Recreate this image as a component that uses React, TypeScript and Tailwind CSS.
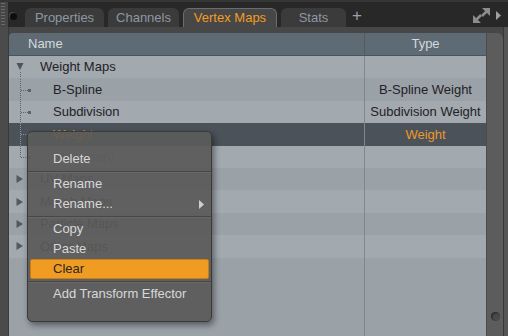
import React from 'react';

type RowKind = 'open' | 'closed' | 'child' | 'last';

interface TreeRow {
  kind: RowKind;
  name: string;
  type?: string;
  selected?: boolean;
}

const rows: TreeRow[] = [
  { kind: 'open', name: 'Weight Maps' },
  { kind: 'child', name: 'B-Spline', type: 'B-Spline Weight' },
  { kind: 'child', name: 'Subdivision', type: 'Subdivision Weight' },
  { kind: 'child', name: 'Weight', type: 'Weight', selected: true },
  { kind: 'last', name: '(new map)' },
  { kind: 'closed', name: 'UV Maps' },
  { kind: 'closed', name: 'Morph Maps' },
  { kind: 'closed', name: 'Particle Maps' },
  { kind: 'closed', name: 'Other Maps' },
];

const tabs = [
  { label: 'Properties', w: 'w-[79px]' },
  { label: 'Channels', w: 'w-[71px]' },
  { label: 'Vertex Maps', w: 'w-[94px]', active: true },
  { label: 'Stats', w: 'w-[65px]' },
];

function Connector({ kind, selected }: { kind: RowKind; selected?: boolean }) {
  const c = selected ? '#8c939a' : '#5c646b';
  return (
    <svg width="44" height="22" className="shrink-0 overflow-visible" shapeRendering="crispEdges">
      {kind === 'open' && (
        <>
          <polygon points="7.5,7 14.5,7 11,14" fill="#4d555c" shapeRendering="auto" />
          <line x1="11.5" y1="16" x2="11.5" y2="23" stroke={c} strokeDasharray="1 1" />
        </>
      )}
      {kind === 'closed' && <polygon points="7.5,7 14,11 7.5,15" fill="#525a61" shapeRendering="auto" />}
      {(kind === 'child' || kind === 'last') && (
        <>
          <line x1="11.5" y1="0" x2="11.5" y2={kind === 'last' ? 12 : 23} stroke={c} strokeDasharray="1 1" />
          <line x1="12" y1="11.5" x2="19" y2="11.5" stroke={c} strokeDasharray="1 1" />
          <rect x="19" y="10" width="3" height="3" fill={c} />
        </>
      )}
    </svg>
  );
}

function MenuItem({ label, sub, active }: { label: string; sub?: boolean; active?: boolean }) {
  return (
    <div
      className={`flex h-[20px] items-center pr-[7px] ${
        active
          ? 'mx-[2px] pl-[22px] rounded-[2px] bg-[#f09c22] border border-[#c97d12] text-[#2a2622]'
          : 'pl-[25px] text-[#d8d8d8]'
      }`}
    >
      <span className="flex-1">{label}</span>
      {sub && (
        <svg width="5" height="9">
          <polygon points="0,0 5,4.5 0,9" fill="#cfcfcf" />
        </svg>
      )}
    </div>
  );
}

function Separator() {
  return (
    <div className="flex h-[5px] flex-col justify-center">
      <div className="h-px bg-[#474747]" />
      <div className="h-px bg-[#686868]" />
    </div>
  );
}

export default function App() {
  return (
    <div className="relative h-[336px] w-[508px] overflow-hidden bg-[#474747] font-['Liberation_Sans',Arial,sans-serif] text-[13px]">
      {/* Tab bar */}
      <div className="flex h-[27px] border-t-2 border-[#353535] bg-[#282828]">
        <div className="w-[8px] bg-[#464646]">
          <svg width="8" height="25">
            {[1, 4, 7, 10, 13, 16, 19, 22].map((y) => (
              <rect key={y} x="1" y={y} width="4" height="1" fill="#6a6a6a" />
            ))}
          </svg>
        </div>
        <div className="ml-[2px] mt-[11px] h-[7px] w-[7px] rounded-full bg-[#0e0e0e] shadow-[-1px_-1px_0_rgba(90,90,90,0.6)]" />
        <div className="ml-[8px] flex items-end gap-[4px]">
          {tabs.map((t) => (
            <div
              key={t.label}
              className={`flex h-[19px] items-center justify-center rounded-t-[6px] ${t.w} ${
                t.active
                  ? 'border-x border-t border-[#6c6c6c] bg-[#474747] text-[#f29c22]'
                  : 'bg-[#3b3b3b] text-[#8d98a1]'
              }`}
            >
              {t.label}
            </div>
          ))}
        </div>
        <div className="ml-[6px] mt-[4px] text-[17px] leading-[20px] text-[#9aa3ab]">+</div>
        <div className="flex-1" />
        <svg width="17" height="15" className="mt-[6px]">
          <polygon points="9,0 17,0 17,8" fill="#8c8c8c" />
          <line x1="14" y1="3" x2="9" y2="8" stroke="#8c8c8c" strokeWidth="2.5" />
          <polygon points="0,7 0,15 8,15" fill="#8c8c8c" />
          <line x1="3" y1="12" x2="8" y2="7" stroke="#8c8c8c" strokeWidth="2.5" />
        </svg>
        <svg width="5" height="9" className="ml-[6px] mr-[7px] mt-[9px]">
          <polygon points="0,0 5,4.5 0,9" fill="#a0a0a0" />
        </svg>
      </div>

      {/* Body */}
      <div className="flex h-[309px]">
        <div className="w-[9px] border-r border-[#3a3a3a] bg-[#4b4b4b]" />
        <div className="flex flex-1 flex-col pt-[6px]">
          <div className="flex h-[23px] rounded-tl-[4px] border-b border-[#4b555c] bg-[#5f6b74] text-[#d3d9dd]">
            <div className="flex w-[356px] items-center border-r border-[#515b63] pl-[19px]">Name</div>
            <div className="flex flex-1 items-center justify-center">Type</div>
          </div>
          <div className="flex flex-1 flex-col bg-[#9aa1a7]">
            {rows.map((r, i) => (
              <div
                key={r.name}
                className={`flex h-[22.4px] items-center ${
                  r.selected ? 'bg-[#4b5259]' : i % 2 === 0 ? 'bg-[#a2a9af]' : 'bg-[#9aa1a7]'
                }`}
              >
                <div className="flex h-full w-[356px] items-center border-r border-[#80878e]">
                  <Connector kind={r.kind} selected={r.selected} />
                  <span
                    className={`${r.kind === 'open' || r.kind === 'closed' ? '-ml-[13px]' : ''} ${
                      r.selected ? 'text-[#ec982a]' : r.kind === 'last' ? 'text-[#6a7178]' : 'text-[#1f2226]'
                    }`}
                  >
                    {r.name}
                  </span>
                </div>
                <div className={`flex-1 text-center ${r.selected ? 'text-[#ec982a]' : 'text-[#1f2226]'}`}>
                  {r.type}
                </div>
              </div>
            ))}
            <div className="flex flex-1">
              <div className="w-[356px] border-r border-[#80878e]" />
            </div>
          </div>
        </div>
        <div className="flex w-[17px] flex-col pt-[6px]">
          <div className="flex flex-1 flex-col items-center justify-end rounded-tr-[6px] border-l border-[#4c4c4c] bg-[#5c5c5c] pb-[15px]">
            <div className="h-[9px] w-[9px] rounded-full bg-[#4a4a4a] shadow-[inset_1px_1px_2px_rgba(0,0,0,0.5)]" />
          </div>
        </div>
        <div className="w-[5px] border-l border-[#383838] bg-[#555555]" />
      </div>

      {/* Context menu */}
      <div className="absolute left-[27px] top-[131px] flex h-[191px] w-[185px] flex-col rounded-[5px] border border-[#3a3a3a] bg-[#5a5a5a]/[0.93] pt-[17px] shadow-[2px_3px_6px_rgba(0,0,0,0.45)]">
        <MenuItem label="Delete" />
        <Separator />
        <MenuItem label="Rename" />
        <MenuItem label="Rename..." sub />
        <Separator />
        <MenuItem label="Copy" />
        <MenuItem label="Paste" />
        <MenuItem label="Clear" active />
        <Separator />
        <MenuItem label="Add Transform Effector" />
      </div>
    </div>
  );
}
